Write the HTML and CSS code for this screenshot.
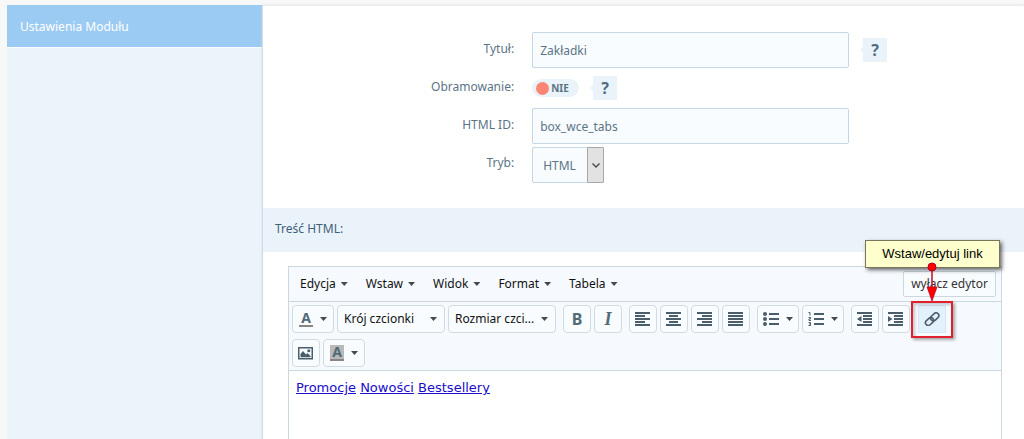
FILE: index.html
```html
<!DOCTYPE html>
<html lang="pl">
<head>
<meta charset="utf-8">
<title>Ustawienia Modułu</title>
<link rel="stylesheet" href="styles.css">
</head>
<body>
<div class="layout">
  <nav class="sidebar">
    <a class="sidebar-item" href="#module">Ustawienia Modułu</a>
  </nav>
  <main class="content">
    <form class="settings">
      <div class="row">
        <label class="row-label" for="title">Tytuł:</label>
        <div class="row-field">
          <input class="text-input" id="title" type="text" value="Zakładki">
          <button class="help" type="button">?</button>
        </div>
      </div>
      <div class="row">
        <label class="row-label" for="border">Obramowanie:</label>
        <div class="row-field">
          <label class="toggle" for="border"><input class="toggle-input" id="border" type="checkbox">NIE</label>
          <button class="help" type="button">?</button>
        </div>
      </div>
      <div class="row">
        <label class="row-label" for="html-id">HTML ID:</label>
        <div class="row-field">
          <input class="text-input" id="html-id" type="text" value="box_wce_tabs">
        </div>
      </div>
      <div class="row">
        <label class="row-label" for="mode">Tryb:</label>
        <div class="row-field">
          <div class="mode">
            <select class="mode-select" id="mode"><option>HTML</option></select>
            <span class="mode-arrow"><svg width="8" height="5" viewBox="0 0 8 5"><path d="M.5 .5 4 4 7.500 .5" fill="none" stroke="#444" stroke-width="1.300"/></svg></span>
          </div>
        </div>
      </div>
    </form>

    <h2 class="section-title">Treść HTML:</h2>

    <section class="editor">
      <div class="menubar">
        <button class="menu" type="button">Edycja<i class="caret"></i></button>
        <button class="menu" type="button">Wstaw<i class="caret"></i></button>
        <button class="menu" type="button">Widok<i class="caret"></i></button>
        <button class="menu" type="button">Format<i class="caret"></i></button>
        <button class="menu" type="button">Tabela<i class="caret"></i></button>
        <button class="editor-off" type="button">wyłącz edytor</button>
      </div>
      <div class="toolbar">
        <div class="group">
          <button class="tool tool-split" type="button" aria-label="Kolor tekstu"><span class="letter letter-color">A</span><i class="caret"></i></button>
          <div class="picker"><select class="picker-select" aria-label="Krój czcionki"><option>Krój czcionki</option></select><i class="caret"></i></div>
          <div class="picker"><select class="picker-select" aria-label="Rozmiar czcionki"><option>Rozmiar czci...</option></select><i class="caret"></i></div>
        </div>
        <div class="group">
          <button class="tool" type="button" aria-label="Pogrubienie"><b class="bold">B</b></button>
          <button class="tool" type="button" aria-label="Kursywa"><i class="italic">I</i></button>
        </div>
        <div class="group">
          <button class="tool" type="button" aria-label="Do lewej"><svg class="icon" viewBox="0 0 16 14"><path d="M0 1h15M0 4h10M0 7h15M0 10h10M0 13h15"/></svg></button>
          <button class="tool" type="button" aria-label="Do środka"><svg class="icon" viewBox="0 0 16 14"><path d="M0 1h15M3 4h9M0 7h15M3 10h9M0 13h15"/></svg></button>
          <button class="tool" type="button" aria-label="Do prawej"><svg class="icon" viewBox="0 0 16 14"><path d="M0 1h15M5 4h10M0 7h15M5 10h10M0 13h15"/></svg></button>
          <button class="tool" type="button" aria-label="Wyjustuj"><svg class="icon" viewBox="0 0 16 14"><path d="M0 1h15M0 4h15M0 7h15M0 10h15M0 13h15"/></svg></button>
        </div>
        <div class="group">
          <button class="tool tool-split" type="button" aria-label="Lista punktowana"><svg class="icon" viewBox="0 0 16 14"><path d="M6 2h10M6 7h10M6 12h10"/><g class="solid"><circle cx="2" cy="2" r="2"/><circle cx="2" cy="7" r="2"/><circle cx="2" cy="12" r="2"/></g></svg><i class="caret"></i></button>
          <button class="tool tool-split" type="button" aria-label="Lista numerowana"><svg class="icon" viewBox="0 0 16 14"><path d="M6 2h10M6 7h10M6 12h10"/><path class="thin" d="M.5 .5h1.500v3M.5 5.500h2v1.500h-1.500v1.500h2M.5 10.500h2v3h-2M1 12h1.500"/></svg><i class="caret"></i></button>
        </div>
        <div class="group">
          <button class="tool" type="button" aria-label="Zmniejsz wcięcie"><svg class="icon" viewBox="0 0 16 14"><path d="M0 1h15M6 4h9M6 7h9M6 10h9M0 13h15"/><path class="solid" d="M4.500 4v6L0 7z"/></svg></button>
          <button class="tool" type="button" aria-label="Zwiększ wcięcie"><svg class="icon" viewBox="0 0 16 14"><path d="M0 1h15M6 4h9M6 7h9M6 10h9M0 13h15"/><path class="solid" d="M0 4v6L4.500 7z"/></svg></button>
        </div>
        <div class="group highlighted">
          <button class="tool tool-active" type="button" aria-label="Wstaw/edytuj link"><svg class="icon" viewBox="0 0 16 14"><g class="link-shape" transform="rotate(-42 8 7)"><rect x="0" y="4.500" width="9" height="5.500" rx="2.750"/><rect x="7" y="4.500" width="9" height="5.500" rx="2.750"/></g></svg></button>
          <span class="frame"></span>
          <svg class="arrow" viewBox="0 0 12 40" width="12" height="40"><path d="M6 5v24" stroke="#c40d1c" stroke-width="1.500"/><circle cx="6" cy="5" r="4" fill="#f00" stroke="#b00020"/><path d="M1 25h10L6 39z" fill="#f00" stroke="#b00020" stroke-width=".7"/></svg>
          <span class="callout">Wstaw/edytuj link</span>
        </div>
        <div class="group">
          <button class="tool" type="button" aria-label="Obraz"><svg class="icon" viewBox="0 0 16 14"><path d="M.75 1.750h13.500v11H.75z" fill="none" class="thin-frame"/><path class="solid" d="M2.500 11.200V8l2.500-3 3 3.500 1.500-1.500 3 3v1.200z"/><circle class="solid" cx="10.800" cy="4.700" r="1.500"/></svg></button>
          <button class="tool tool-split" type="button" aria-label="Kolor tła"><span class="letter letter-back">A</span><i class="caret"></i></button>
        </div>
      </div>
      <div class="document">
        <a href="#promocje">Promocje</a> <a href="#nowosci">Nowości</a> <a href="#bestsellery">Bestsellery</a>
      </div>
    </section>
  </main>
</div>
</body>
</html>
```
FILE: styles.css
```css
* { box-sizing: border-box; }

body {
  margin: 0;
  background: #f8f8f8;
  color: #5b7486;
  font: 12px/18px "Noto Sans", "Open Sans", sans-serif;
}

button, input, select { font: inherit; color: inherit; }
button { padding: 0; border: 0; background: none; }

.layout {
  display: flex;
  min-height: 100vh;
  padding: 5px 0 0 7px;
}

.sidebar {
  flex: 0 0 256px;
  background: #ebf3fb;
  border-right: 1px solid #d3dce6;
}

.sidebar-item {
  display: block;
  padding: 13px 13px 11px;
  background: #9bcbf3;
  border-bottom: 1px solid #fff;
  color: #fff;
  text-decoration: none;
}

.content {
  flex: 1;
  display: flex;
  flex-direction: column;
  min-width: 0;
  background: #fff;
  border-top: 1px solid #eee;
  box-shadow: -1px 0 2px #d3dce6;
}

.settings { padding: 25px 0; }

.row {
  display: grid;
  grid-template-columns: 33% 1fr;
  gap: 18px;
  align-items: center;
  height: 38px;
}

.row-label { padding-bottom: 2px; text-align: right; }
.row-field { display: flex; align-items: center; gap: 14px; }

.text-input {
  flex: 0 1 317px;
  min-width: 0;
  height: 36px;
  padding: 1px 7px 0;
  background: #f8fcff;
  border: 1px solid #c6d6e2;
  border-radius: 2px;
}

.help {
  position: relative;
  width: 24px;
  height: 24px;
  background: #ebf3fa;
  color: #4f6e83;
  font-size: 16px;
  font-weight: 700;
}

.help::before {
  content: "";
  position: absolute;
  top: 9px;
  left: -3px;
  border: 3px solid transparent;
  border-left: 0;
  border-right-color: #ebf3fa;
}

.toggle {
  display: flex;
  align-items: center;
  gap: 2px;
  width: 47px;
  height: 18px;
  padding: 0 4px;
  border-radius: 9px;
  background: #ebf3fa;
  font-size: 10px;
  font-weight: 700;
}

.toggle-input {
  appearance: none;
  width: 13px;
  height: 13px;
  margin: 0;
  border-radius: 50%;
  background: #fb8675;
}

.mode {
  display: flex;
  position: relative;
  margin-top: 2px;
}

.mode-select {
  appearance: none;
  width: 72px;
  height: 36px;
  padding: 1px 10px 0;
  background: #f8fcff;
  border: 1px solid #c6d6e2;
  border-radius: 2px;
}

.mode-arrow {
  position: absolute;
  inset: 0 0 0 auto;
  display: grid;
  place-items: center;
  width: 17px;
  background: #e2e2e3;
  border: 1px solid #a5a7aa;
  border-radius: 1px;
  pointer-events: none;
}

.section-title {
  margin: 0;
  padding: 12px 12px 14px;
  background: #ebf3fa;
  color: #3f6079;
  font-size: 12px;
  font-weight: 400;
}

.editor {
  flex: 1;
  display: flex;
  flex-direction: column;
  margin: 14px 22px 0 25px;
  border: 1px solid #ccd8e0;
  border-bottom: 0;
  color: #111;
}

.menubar {
  display: flex;
  align-items: center;
  gap: 18px;
  height: 35px;
  padding: 0 5px 0 11px;
  background: #f6faff;
  border-bottom: 1px solid #ccd8e0;
}

.menu { display: flex; align-items: center; gap: 5px; }

.caret {
  flex: none;
  width: 7px;
  height: 4px;
  background: #414b52;
  clip-path: polygon(0 0, 100% 0, 50% 100%);
}

.editor-off {
  width: 93px;
  height: 26px;
  margin-left: auto;
  background: #f8fcff;
  border: 1px solid #ccd8e0;
  border-radius: 2px;
  color: #333;
  white-space: nowrap;
}

.toolbar {
  display: flex;
  flex-wrap: wrap;
  gap: 6px 7px;
  padding: 3px;
  background: #f6faff;
  border-bottom: 1px solid #ccd8e0;
}

.group { display: flex; gap: 3px; }

.tool {
  display: flex;
  align-items: center;
  justify-content: center;
  width: 28px;
  height: 28px;
  background: #f8fcff;
  border: 1px solid #d0dbe2;
  border-radius: 4px;
}

.tool-split { gap: 7px; width: 42px; }

.icon {
  width: 16px;
  height: 14px;
  fill: none;
  stroke: #4a5d6b;
  stroke-width: 2;
}

.icon .solid { fill: #4a5d6b; stroke: none; }
.icon .thin { stroke-width: 1; }
.icon .thin-frame { stroke-width: 1.5; }
.link-shape { stroke-width: 1.6; }

.letter {
  width: 14px;
  color: #526a78;
  font-size: 14px;
  font-weight: 700;
  line-height: 14px;
  border-bottom: 2px solid #8a8583;
}

.letter-back { background: #b9b9b9; }

.bold { color: #526a78; font-size: 16px; }
.italic { color: #526a78; font: italic 700 18px/18px "Liberation Serif", serif; }

.picker { display: flex; align-items: center; position: relative; }
.picker .caret { position: absolute; right: 8px; pointer-events: none; }

.picker-select {
  appearance: none;
  width: 108px;
  height: 28px;
  padding: 0 6px;
  background: #f8fcff;
  border: 1px solid #d0dbe2;
  border-radius: 4px;
}

.highlighted { position: relative; margin: 0 1px; }

.tool-active {
  background: #e3f1fc;
  border-color: #d3e6f5;
  border-radius: 1px;
}

.frame {
  position: absolute;
  inset: -4px -7px -5px;
  border: 2px solid #e0202c;
  box-shadow: 2px 2px 3px #0005, inset 2px 2px 3px #0003;
  pointer-events: none;
}

.callout {
  position: absolute;
  bottom: 65px;
  left: 50%;
  width: 135px;
  margin-left: -67px;
  padding: 4px 0;
  background: #ffffce;
  border: 1px solid #77775c;
  box-shadow: 2px 2px 4px #0009;
  color: #000;
  font: 13px/18px "Liberation Sans", Arial, sans-serif;
  text-align: center;
  white-space: nowrap;
}

.arrow {
  position: absolute;
  bottom: 31px;
  left: 8px;
  z-index: 1;
}

.document {
  flex: 1;
  padding: 8px 7px;
  background: #fff;
  font: 13px/18px "DejaVu Sans", Verdana, sans-serif;
}

.document a { color: #1a0dcc; }
```
